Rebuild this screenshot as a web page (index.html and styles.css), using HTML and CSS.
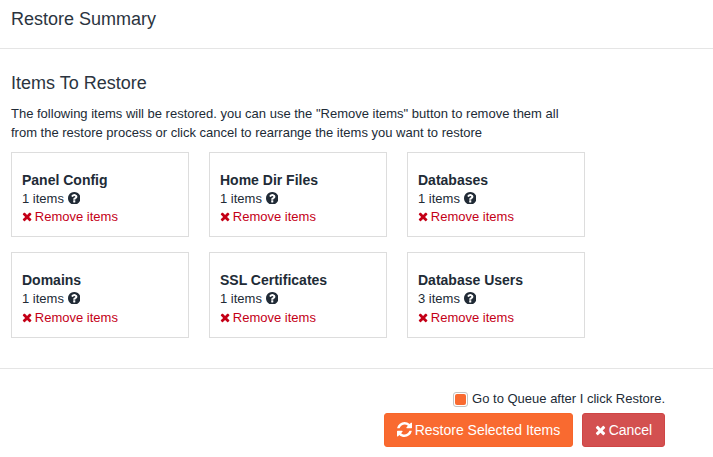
FILE: index.html
```html
<!DOCTYPE html>
<html lang="en">
<head>
<meta charset="utf-8">
<title>Restore Summary</title>
<link rel="stylesheet" href="styles.css">
</head>
<body>
<svg class="defs" width="0" height="0" aria-hidden="true">
  <symbol id="i-times" viewBox="0 0 1408 1792"><path fill="currentColor" d="M1298 1322q0 40-28 68l-136 136q-28 28-68 28t-68-28l-294-294-294 294q-28 28-68 28t-68-28l-136-136q-28-28-28-68t28-68l294-294-294-294q-28-28-28-68t28-68l136-136q28-28 68-28t68 28l294 294 294-294q28-28 68-28t68 28l136 136q28 28 28 68t-28 68l-294 294 294 294q28 28 28 68z"/></symbol>
  <symbol id="i-question" viewBox="128 128 1536 1536"><path fill="currentColor" d="M1024 1376v-192q0-14-9-23t-23-9h-192q-14 0-23 9t-9 23v192q0 14 9 23t23 9h192q14 0 23-9t9-23zm256-672q0-88-55.5-163t-138.5-116-170-41q-243 0-371 213-15 24 8 42l132 100q7 6 19 6 16 0 25-12 53-68 86-92 34-24 86-24 48 0 85.5 26t37.5 59q0 38-20 61t-68 45q-63 28-115.5 86.5t-52.5 125.5v36q0 14 9 23t23 9h192q14 0 23-9t9-23q0-19 21.5-49.5t54.5-49.5q32-18 49-28.5t46-35 44.5-48 28-60.5 12.5-81zm384 192q0 209-103 385.5t-279.5 279.5-385.5 103-385.5-103-279.5-279.5-103-385.5 103-385.5 279.5-279.5 385.5-103 385.5 103 279.5 279.5 103 385.5z"/></symbol>
  <symbol id="i-refresh" viewBox="128 128 1536 1536"><path fill="currentColor" d="M1639 1056q0 5-1 7-64 268-268 434.5t-478 166.5q-146 0-282.5-55t-243.5-157l-129 129q-19 19-45 19t-45-19-19-45v-448q0-26 19-45t45-19h448q26 0 45 19t19 45-19 45l-137 137q71 66 161 102t187 36q134 0 250-65t186-179q11-17 53-117 8-23 30-23h192q13 0 22.5 9.5t9.5 22.5zm25-800v448q0 26-19 45t-45 19h-448q-26 0-45-19t-19-45 19-45l138-138q-148-137-349-137-134 0-250 65t-186 179q-11 17-53 117-8 23-30 23h-199q-13 0-22.5-9.5t-9.5-22.5v-7q65-268 270-434.5t480-166.5q146 0 284 55.5t245 156.5l130-129q19-19 45-19t45 19 19 45z"/></symbol>
</svg>

<header class="modal-header">
  <h4 class="modal-title">Restore Summary</h4>
</header>

<main class="modal-body">
  <h4 class="section-title">Items To Restore</h4>
  <p class="intro">The following items will be restored. you can use the "Remove items" button to remove them all from the restore process or click cancel to rearrange the items you want to restore</p>
  <div class="grid">
    <section class="card">
      <div class="card-title">Panel Config</div>
      <div class="count">1 items <svg class="ico-q"><use href="#i-question"/></svg></div>
      <a class="remove"><svg class="ico-x"><use href="#i-times"/></svg> Remove items</a>
    </section>
    <section class="card">
      <div class="card-title">Home Dir Files</div>
      <div class="count">1 items <svg class="ico-q"><use href="#i-question"/></svg></div>
      <a class="remove"><svg class="ico-x"><use href="#i-times"/></svg> Remove items</a>
    </section>
    <section class="card">
      <div class="card-title">Databases</div>
      <div class="count">1 items <svg class="ico-q"><use href="#i-question"/></svg></div>
      <a class="remove"><svg class="ico-x"><use href="#i-times"/></svg> Remove items</a>
    </section>
    <section class="card">
      <div class="card-title">Domains</div>
      <div class="count">1 items <svg class="ico-q"><use href="#i-question"/></svg></div>
      <a class="remove"><svg class="ico-x"><use href="#i-times"/></svg> Remove items</a>
    </section>
    <section class="card">
      <div class="card-title">SSL Certificates</div>
      <div class="count">1 items <svg class="ico-q"><use href="#i-question"/></svg></div>
      <a class="remove"><svg class="ico-x"><use href="#i-times"/></svg> Remove items</a>
    </section>
    <section class="card">
      <div class="card-title">Database Users</div>
      <div class="count">3 items <svg class="ico-q"><use href="#i-question"/></svg></div>
      <a class="remove"><svg class="ico-x"><use href="#i-times"/></svg> Remove items</a>
    </section>
  </div>
</main>

<footer class="modal-footer">
  <label class="queue">
    <span class="check"><span class="check-fill"></span></span>
    <span>Go to Queue after I click Restore.</span>
  </label>
  <div class="actions">
    <button class="btn btn-orange"><svg class="ico-r"><use href="#i-refresh"/></svg> Restore Selected Items</button>
    <button class="btn btn-red"><svg class="ico-xb"><use href="#i-times"/></svg> Cancel</button>
  </div>
</footer>
</body>
</html>
```

FILE: styles.css
```css
* { box-sizing: border-box; }
html, body { margin: 0; padding: 0; }
body {
  width: 713px;
  height: 457px;
  overflow: hidden;
  background: #fff;
  color: #212b36;
  font-family: "Liberation Sans", Arial, sans-serif;
  font-size: 13px;
  line-height: 18.57px;
}
.defs { position: absolute; }
svg { display: inline-block; }

.modal-header {
  height: 49px;
  padding: 9px 11px 0;
  border-bottom: 1px solid #e5e5e5;
}
.modal-title, .section-title {
  margin: 0;
  font-size: 18px;
  font-weight: 400;
  line-height: 20px;
  color: #2b3440;
}
.modal-body { padding: 24px 11px 0; height: 319px; }
.intro { margin: 11px 0 10px; width: 560px; line-height: 19px; }

.grid {
  display: grid;
  grid-template-columns: repeat(3, 178px);
  column-gap: 20px;
  row-gap: 15px;
}
.card {
  height: 85.3px;
  padding: 18px 10px 0;
  border: 1px solid #ddd;
  background: #fff;
}
.card-title { font-size: 14px; font-weight: 700; }
.ico-q { width: 12.5px; height: 12.5px; vertical-align: -1.5px; }
.remove { display: block; color: #c40017; margin-top: 0.23px; }
.ico-x { width: 10.2px; height: 13px; vertical-align: -2px; color: #c40017; margin-right: -1px; }

.modal-footer {
  border-top: 1px solid #e5e5e5;
  height: 89px;
  padding: 22px 48px 0 0;
  display: flex;
  flex-direction: column;
  align-items: flex-end;
}
.queue { display: flex; align-items: center; gap: 4px; height: 16px; }
.check {
  width: 15px;
  height: 15px;
  display: flex;
  align-items: center;
  justify-content: center;
  border: 1px solid #c4c4c4;
  border-radius: 3px;
}
.check-fill { width: 11px; height: 11px; border-radius: 2px; background: #f96a30; }
.actions { display: flex; gap: 9px; margin-top: 6px; }
.btn {
  height: 34px;
  padding: 0 4px;
  border: 1px solid transparent;
  border-radius: 3px;
  color: #fff;
  font: inherit;
  font-size: 14px;
  white-space: nowrap;
  display: block;
}
.btn-orange { width: 189px; background: #f96a30; border-color: #f8662a; }
.btn-red { width: 83px; background: #d35050; border-color: #cf4545; }
.ico-r { width: 15px; height: 15px; vertical-align: -2.5px; margin-right: -1px; }
.ico-xb { width: 11px; height: 14px; vertical-align: -2px; margin-right: -1px; }
```
